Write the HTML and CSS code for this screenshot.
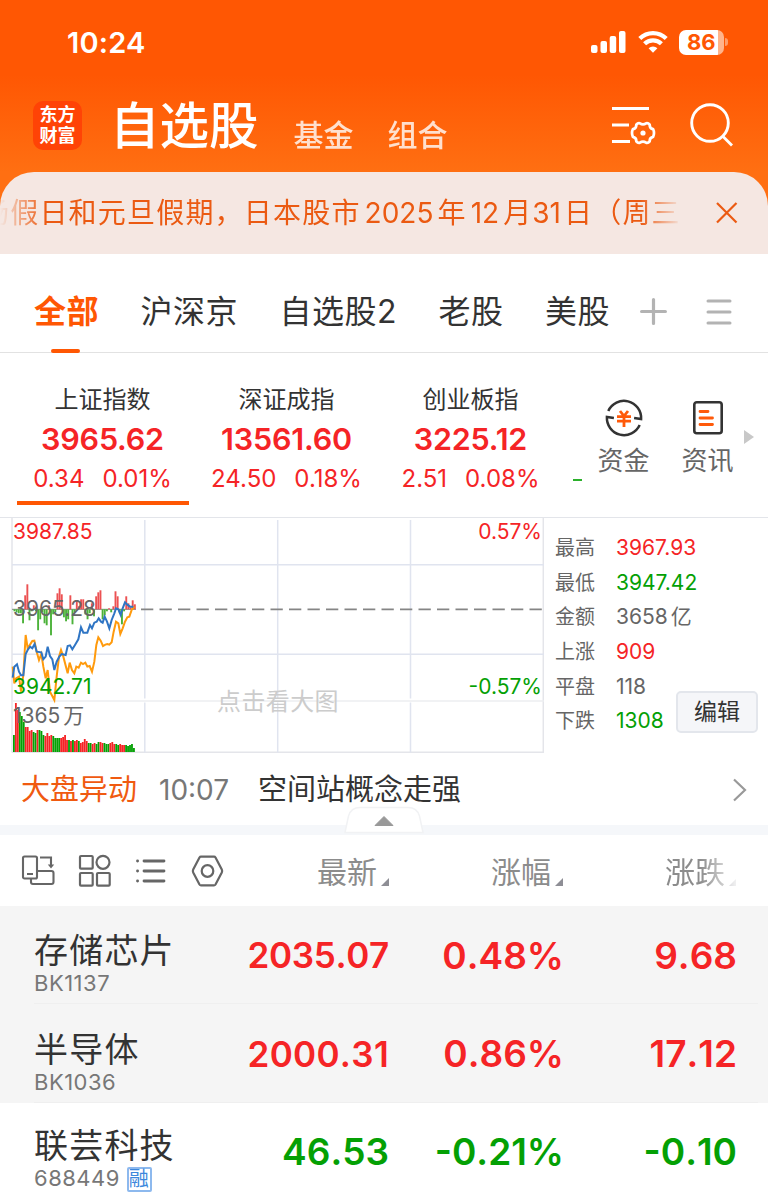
FILE: index.html
```html
<!DOCTYPE html>
<html lang="zh-CN">
<head>
  <meta charset="UTF-8">
  <title>自选股</title>
  <meta name="viewport" content="width=device-width, initial-scale=1.0">
  <link rel="stylesheet" href="styles.css">
</head>
<body>

<header class="top">
  <div class="status">
    <span class="time">10:24</span>
    <svg class="signal" width="36" height="24" viewBox="0 0 36 24" fill="#fff">
      <rect x="0" y="15" width="6.5" height="8" rx="2"/>
      <rect x="9.5" y="11" width="6.5" height="12" rx="2"/>
      <rect x="18.7" y="6" width="6.5" height="17" rx="2"/>
      <rect x="28" y="1" width="6.5" height="22" rx="2"/>
    </svg>
    <svg class="wifi" width="30" height="24" viewBox="0 0 30 24" fill="none" stroke="#fff" stroke-width="4.2">
      <path d="M1.8 8.6a18.6 18.6 0 0 1 26.4 0"/>
      <path d="M6.6 13.8a11.8 11.8 0 0 1 16.8 0"/>
      <path d="M10.6 18.3a6.2 6.2 0 0 1 8.8 0L15 22.8z" fill="#fff" stroke="none"/>
    </svg>
    <span class="battery">86</span>
    <span class="battery-cap"></span>
  </div>
  <nav class="nav">
    <div class="logo">东方<br>财富</div>
    <span class="nav-title">自选股</span>
    <span class="nav-link">基金</span>
    <span class="nav-link second">组合</span>
    <svg class="list-set" width="44" height="42" viewBox="0 0 44 42" fill="none" stroke="#fff" stroke-width="3">
      <path d="M0 3.5h37M0 20h17M0 36.5h18"/>
      <path stroke-linejoin="round" stroke-width="2.7" d="M27.9 18.3q3.1 2.2 6.2 0q2-.6 3.6 1.4q-.2 3.8 3.4 4.5q1.8 3.8 0 7.6q-3.6.7-3.4 4.5q-1.6 2-3.6 1.4q-3.1-2.2-6.2 0q-2 .6-3.6-1.4q.2-3.8-3.4-4.5q-1.8-3.8 0-7.6q3.6-.7 3.4-4.5q1.6-2 3.6-1.4z"/>
      <circle cx="31" cy="28" r="2.6" fill="#fff" stroke="none"/>
    </svg>
    <svg class="search" width="44" height="46" viewBox="0 0 44 46" fill="none" stroke="#fff" stroke-width="2.9">
      <circle cx="20" cy="21" r="18.3"/>
      <path d="M33 34.5l9 9"/>
    </svg>
  </nav>
</header>

<div class="notice-wrap">
  <div class="notice">
    <div class="notice-text"><p>场假日和元旦假期，日本股市<i>2025</i>年<i>12</i>月<i class="tight">31</i>日（周三）</p></div>
    <svg width="22" height="22" viewBox="0 0 22 22" stroke="#eb5a12" stroke-width="2.2"><path d="M1 1l19.5 19.5M20.5 1L1 20.5"/></svg>
  </div>
</div>

<nav class="tabs">
  <span class="tab active">全部</span>
  <span class="tab">沪深京</span>
  <span class="tab">自选股2</span>
  <span class="tab">老股</span>
  <span class="tab">美股</span>
  <svg class="plus" width="27" height="27" viewBox="0 0 27 27" stroke="#b3b3b3" stroke-width="3.2" stroke-linecap="round"><path d="M13.5 1.6v23.8M1.6 13.5h23.8"/></svg>
  <svg class="menu" width="26" height="26" viewBox="0 0 26 26" stroke="#b3b3b3" stroke-width="3" stroke-linecap="round"><path d="M2 2h22M2 13h22M2 24h22"/></svg>
</nav>

<section class="indices">
  <div class="index active">
    <h3>上证指数</h3>
    <b>3965.62</b>
    <p><span>0.34</span><span>0.01%</span></p>
  </div>
  <div class="index">
    <h3>深证成指</h3>
    <b>13561.60</b>
    <p><span>24.50</span><span>0.18%</span></p>
  </div>
  <div class="index">
    <h3>创业板指</h3>
    <b>3225.12</b>
    <p><span>2.51</span><span>0.08%</span></p>
  </div>
  <i class="next-index"></i>
  <div class="shortcut">
    <svg width="40" height="40" viewBox="0 0 40 40" fill="none" stroke="#333" stroke-width="2.5">
      <path d="M4.3 12.9A17.2 17.2 0 0 1 37.1 21l-7-1"/>
      <path d="M35.7 27.1A17.2 17.2 0 0 1 2.9 19l7 1"/>
      <path stroke="#ff5a0a" stroke-width="2.8" d="M16 13l4 5l4-5M13 18.7h14M13 23.2h14M20 17v12"/>
    </svg>
    <span>资金</span>
  </div>
  <div class="shortcut">
    <svg width="40" height="40" viewBox="0 0 40 40" fill="none" stroke="#333" stroke-width="2.6">
      <rect x="6.3" y="4.3" width="27.4" height="31" rx="2.5"/>
      <path stroke="#ff5a0a" stroke-width="2.8" stroke-linecap="round" d="M12 13.5h8M12 20h12.500M12 26.500h12.500"/>
    </svg>
    <span>资讯</span>
  </div>
  <i class="more-arrow"></i>
</section>

<section class="market">
  <svg class="chart" width="544" height="237" viewBox="0 7 544 237">
    <g fill="none" stroke="#e0e4ef" stroke-width="1.5">
      <path d="M12 7.5v235M543.3 7.5v235M12 242.3h532" stroke="#e4e5ea"/>
      <path d="M144.8 10v178.5M277.7 10v178.5M410.5 10v178.5M144.8 192.5v50M277.7 192.5v50M410.5 192.5v50M12 54.7h532M12 144.2h532"/>
      <path d="M12 191h532" stroke="#eceef1"/>
    </g>
    <path d="M141 99.3h401" stroke="#858585" stroke-width="1.7" stroke-dasharray="12.3 6.2"/>
    <path d="M12 99.3h124" stroke="#858585" stroke-width="1"/>
    <text x="217" y="199.5" class="hint">点击看大图</text>
    <g id="strength"></g>
    <g id="volume"></g>
    <g fill="none" stroke-width="6" transform="scale(.33333)">
      <polyline stroke="#ff9a0c" points="38,470 43,520 48,505 57,500 63,545 70,495 77,375 83,415 97,393 103,392 110,425 117,450 124,432 130,470 137,505 143,480 150,545 163,570 170,500 177,440 183,420 190,440 203,490 209,458 216,480 223,490 229,470 236,473 243,458 249,462 256,458 262,470 269,468 276,485 283,455 289,405 295,382 302,392 309,408 316,404 322,402 328,404 335,397 341,365 348,335 355,340 361,372 368,355 375,335 382,322 388,320 395,300 403,290"/>
      <polyline stroke="#2f75c4" points="38,503 43,470 51,463 57,485 63,496 70,496 77,432 83,420 90,410 97,415 104,402 110,425 124,427 130,448 137,440 143,410 150,438 157,448 163,480 170,455 178,440 185,432 197,435 203,408 210,406 217,418 225,405 235,388 243,352 250,368 262,368 270,345 276,355 283,338 290,335 296,325 303,335 308,338 314,320 321,335 328,355 335,330 343,310 348,295 355,298 362,315 368,295 375,277 382,284 390,290 400,290"/>
    </g>
    <g class="axis">
      <text x="13" y="28.5" class="up">3987.85</text>
      <text x="13" y="106" class="mid">3965.28</text>
      <text x="13" y="183.5" class="down">3942.71</text>
      <text x="13" y="213" class="mid">1365<tspan dx="3">万</tspan></text>
      <text x="542" y="28.5" text-anchor="end" class="up">0.57%</text>
      <text x="542" y="183.5" text-anchor="end" class="down">-0.57%</text>
    </g>
  </svg>
  <dl class="stats">
    <dt>最高</dt><dd class="up">3967.93</dd>
    <dt>最低</dt><dd class="down">3947.42</dd>
    <dt>金额</dt><dd>3658<em>亿</em></dd>
    <dt>上涨</dt><dd class="up">909</dd>
    <dt>平盘</dt><dd>118</dd>
    <dt>下跌</dt><dd class="down">1308</dd>
  </dl>
  <button class="edit">编辑</button>
</section>

<section class="news">
  <span class="news-tag">大盘异动</span>
  <span class="news-time">10:07</span>
  <span class="news-text">空间站概念走强</span>
  <svg width="16" height="24" viewBox="0 0 16 24" fill="none" stroke="#999" stroke-width="2.2"><path d="M2 1.5L13 12L2 22.5"/></svg>
</section>

<div class="divider">
  <svg class="pull" width="80" height="28" viewBox="0 0 80 28">
    <path d="M1 26.5L4.5 10Q7 1.5 16 1.5H64Q73 1.5 75.5 10L79 26.5z" fill="#fff" stroke="#f1f2f4" stroke-width="1.5"/>
    <path d="M40 10.500l9 9H31z" fill="#999" stroke="#999" stroke-linejoin="round"/>
  </svg>
</div>

<div class="grid list-head">
  <div class="tools">
    <svg width="34" height="34" viewBox="0 0 34 34" fill="none" stroke="#666" stroke-width="2.1">
      <rect x="2" y="2.500" width="14" height="22" rx="1.500"/>
      <path d="M6 20h6M19 3.500h11v8M17 17h13.500a2 2 0 0 1 2 2v9a2 2 0 0 1-2 2H12a2 2 0 0 1-2-2V25"/>
      <path d="M26.800 10.500h6.400L30 14.500z" fill="#666" stroke="none"/>
    </svg>
    <svg width="34" height="34" viewBox="0 0 34 34" fill="none" stroke="#666" stroke-width="2.200">
      <rect x="2" y="2" width="12.700" height="12.700" rx="1"/>
      <circle cx="25" cy="8.300" r="6.500"/>
      <rect x="2" y="19" width="12.700" height="12.700" rx="1"/>
      <rect x="19" y="19" width="12.700" height="12.700" rx="1"/>
    </svg>
    <svg width="34" height="34" viewBox="0 0 34 34" fill="none" stroke="#666" stroke-width="2.800" stroke-linecap="round">
      <path d="M10 7h20M10 17h20M10 27h20M3.500 7h.1M3.500 17h.1M3.500 27h.1"/>
    </svg>
    <svg width="34" height="34" viewBox="0 0 34 34" fill="none" stroke="#666" stroke-width="2.200" stroke-linejoin="round">
      <path d="M10 2.700h13q1 0 1.500.8l6.300 12q.7 1.500 0 3l-6.300 12q-.5.800-1.500.8H10q-1 0-1.500-.8l-6.300-12q-.7-1.500 0-3l6.300-12q.5-.8 1.500-.8z"/>
      <circle cx="16.500" cy="17" r="5.800"/>
    </svg>
  </div>
  <span class="sort">最新</span>
  <span class="sort">涨幅</span>
  <span class="sort fade">涨跌</span>
</div>

<div class="grid stock pinned">
  <div class="name">存储芯片<small>BK1137</small></div>
  <b class="up long">2035.07</b><b class="up percent">0.48%</b><b class="up">9.68</b>
</div>
<div class="grid stock pinned">
  <div class="name">半导体<small>BK1036</small></div>
  <b class="up long wide">2000.31</b><b class="up percent">0.86%</b><b class="up">17.12</b>
</div>
<div class="grid stock">
  <div class="name">联芸科技<small>688449 <span class="badge">融</span></small></div>
  <b class="down">46.53</b><b class="down percent">-0.21%</b><b class="down">-0.10</b>
</div>

<script src="chart.js"></script>
</body>
</html>
```

FILE: styles.css
```css
body {
  margin: 0;
  height: 1199px;
  overflow: hidden;
  background: #fff;
  color: #333;
  font-family: "Inter", "Noto Sans CJK SC", sans-serif;
}

h3, p, dl, dd {
  margin: 0;
  font-weight: 400;
}

svg {
  display: block;
  flex: none;
}

i, em {
  font-style: normal;
}

.up {
  color: #f52426;
  fill: #f52426;
}

.down {
  color: #04a004;
  fill: #04a004;
}

/* header */
.top {
  height: 172px;
  background: linear-gradient(#ff5703 75px, #ff6f12 172px);
  color: #fff;
}

.status {
  display: flex;
  align-items: center;
  height: 84px;
  padding-left: 67px;
}

.time {
  width: 524px;
  font-size: 29px;
  font-weight: 600;
  letter-spacing: .2px;
}

.wifi {
  margin-left: 11px;
}

.battery {
  width: 45px;
  height: 25px;
  margin-left: 11px;
  border-radius: 7px;
  background: linear-gradient(90deg, #fff 39px, #ffb48c 39px);
  color: #ff5703;
  font-size: 22px;
  font-weight: 700;
  line-height: 25px;
  text-indent: 8px;
}

.battery-cap {
  width: 3px;
  height: 8px;
  margin-left: 1px;
  border-radius: 0 4px 4px 0;
  background: #ff9c69;
}

.nav {
  display: flex;
  align-items: center;
  height: 82px;
  padding-left: 33px;
}

.logo {
  width: 49px;
  height: 49px;
  border-radius: 10px;
  background: #ff4306;
  font-size: 18px;
  font-weight: 700;
  line-height: 21px;
  text-align: center;
  box-sizing: border-box;
  padding-top: 3px;
}

.nav-title {
  margin-left: 28px;
  font-size: 49.5px;
  font-weight: 500;
  line-height: 82px;
  padding-top: 2px;
}

.nav-link {
  margin: 15px 0 0 35px;
  font-size: 30px;
  font-weight: 500;
  opacity: .8;
}

.nav-link.second {
  margin-left: 34px;
}

.list-set {
  margin: 2px 0 0 164px;
}

.search {
  margin-left: 34px;
}

/* scrolling notice */
.notice-wrap {
  background: #ff6f12;
}

.notice {
  display: flex;
  align-items: center;
  height: 82px;
  border-radius: 34px 34px 0 0;
  background: #f5e7e2;
}

.notice-text {
  width: 685px;
  margin-right: 31px;
  overflow: hidden;
  -webkit-mask: linear-gradient(90deg, transparent, #000 45px, #000 640px, transparent 682px);
  mask: linear-gradient(90deg, transparent, #000 45px, #000 640px, transparent 682px);
}

.notice-text p {
  margin-left: -19px;
  color: #eb5a12;
  font-size: 28px;
  letter-spacing: 1.2px;
  line-height: 44px;
  white-space: nowrap;
}

.notice-text i {
  margin: 0 4px;
  letter-spacing: 0;
}

.notice-text .tight {
  margin: 0 3px 0 0;
}

/* group tabs */
.tabs {
  display: flex;
  align-items: center;
  height: 81px;
  padding: 17px 36px 0 34px;
  border-bottom: 1px solid #e2e2e2;
}

.tab {
  position: relative;
  margin-right: 41.5px;
  font-size: 32px;
  letter-spacing: .5px;
  line-height: 81px;
}

.tab.active {
  color: #ff5703;
  font-weight: 700;
}

.tab.active::after {
  content: "";
  position: absolute;
  left: 17px;
  bottom: -1px;
  width: 29px;
  height: 4px;
  border-radius: 2px;
  background: #ff5703;
}

.plus {
  margin-left: -12px;
}

.menu {
  margin-left: 39px;
}

/* index quotes */
.indices {
  display: flex;
  height: 164px;
  padding-left: 10.5px;
}

.index {
  width: 184px;
  padding-top: 30px;
  text-align: center;
}

.index h3 {
  font-size: 24px;
  line-height: 34px;
}

.index b {
  display: block;
  color: #f52426;
  font-size: 30.5px;
  font-weight: 600;
  letter-spacing: -.2px;
  line-height: 44px;
}

.index p {
  display: flex;
  justify-content: center;
  gap: 18px;
  color: #f52426;
  font-size: 24px;
  line-height: 35px;
}

.index.active::after {
  content: "";
  display: block;
  width: 172px;
  height: 4px;
  margin: 5px auto 0;
  background: #ff5703;
}

.next-index {
  width: 9px;
  height: 2px;
  margin: 126px 0 0 10px;
  background: #2bb02b;
}

.shortcut {
  width: 84px;
  padding-top: 45px;
  color: #666;
  font-size: 26px;
  line-height: 46px;
  text-align: center;
}

.shortcut svg {
  margin: 0 auto;
}

.more-arrow {
  margin: 77px 0 0 -6px;
  height: 0;
  border-left: 10px solid #c8c8c8;
  border-top: 7px solid transparent;
  border-bottom: 7px solid transparent;
}

/* minute chart and stats */
.market {
  position: relative;
  display: flex;
  height: 237px;
  box-shadow: inset 0 1px #e3e5ea;
}

.axis {
  font-size: 21px;
}

.mid {
  fill: #666;
}

.hint {
  fill: #ccc;
  font-size: 24px;
  letter-spacing: .4px;
}

.stats {
  display: grid;
  grid-template-columns: 61px auto;
  grid-auto-rows: 34.7px;
  padding: 14px 0 0 11px;
  color: #666;
  font-size: 20px;
  line-height: 34.7px;
}

.stats dd {
  font-size: 21px;
}

.stats em {
  margin-left: 3px;
}

.edit {
  position: absolute;
  right: 10px;
  top: 174px;
  width: 82px;
  height: 42px;
  padding: 0;
  border: 2px solid #e3e6ec;
  border-radius: 5px;
  background: #f5f6f9;
  color: #333;
  font: 23px/38px "Inter", "Noto Sans CJK SC", sans-serif;
}

/* market news */
.news {
  display: flex;
  align-items: center;
  height: 71px;
  padding-left: 21px;
  font-size: 29px;
  line-height: 70px;
}

.news-tag {
  width: 138px;
  color: #f05a10;
}

.news-time {
  width: 99px;
  color: #777;
  font-size: 28px;
}

.news-text {
  width: 474px;
}

.divider {
  position: relative;
  height: 10px;
  background: #f5f7fa;
}

.pull {
  position: absolute;
  left: 344px;
  bottom: 1px;
}

/* stock list */
.grid {
  display: grid;
  grid-template-columns: 200px 188px 174px 174px;
  align-items: center;
}

.list-head {
  height: 71px;
}

.tools {
  display: flex;
  gap: 22.5px;
  padding-left: 21px;
}

.sort {
  position: relative;
  padding: 3px 11px 0 0;
  color: #8c8c8c;
  font-size: 30px;
  line-height: 68px;
  text-align: right;
}

.sort::after {
  content: "";
  position: absolute;
  right: -1px;
  bottom: 20px;
  border-left: 8px solid transparent;
  border-bottom: 8px solid #8e8e95;
}

.sort.fade {
  -webkit-mask: linear-gradient(90deg, #000 138px, rgba(0, 0, 0, .1) 175px);
  mask: linear-gradient(90deg, #000 138px, rgba(0, 0, 0, .1) 175px);
}

.stock {
  position: relative;
  height: 98.4px;
}

.pinned {
  background: #f5f5f5;
}

.pinned::after {
  content: "";
  position: absolute;
  left: 34px;
  right: 10px;
  bottom: 0;
  height: 1px;
  background: #efefef;
}

.name {
  padding: 14px 0 0 34px;
  font-size: 34px;
  letter-spacing: 1.2px;
  line-height: 42px;
  white-space: nowrap;
}

.name small {
  display: block;
  color: #777;
  font-size: 22px;
  letter-spacing: .5px;
  line-height: 22px;
}

.badge {
  display: inline-block;
  width: 21px;
  height: 21px;
  border: 2px solid #8db9ee;
  border-radius: 2px;
  color: #3c87dc;
  font-size: 20px;
  letter-spacing: 0;
  line-height: 21px;
  vertical-align: top;
}

.stock b {
  margin-right: -1px;
  font-size: 37px;
  font-weight: 600;
  font-kerning: none;
  text-align: right;
}

.stock .percent {
  margin-right: -2px;
}

.stock .long {
  font-size: 35px;
  letter-spacing: -.3px;
}

.stock .wide {
  letter-spacing: .3px;
}
```

FILE: chart.js
```js
const NS = "http://www.w3.org/2000/svg";

function bar(group, x, y, w, h, color) {
  const r = document.createElementNS(NS, "rect");
  r.setAttribute("x", x);
  r.setAttribute("y", y);
  r.setAttribute("width", w);
  r.setAttribute("height", h);
  r.setAttribute("fill", color);
  group.appendChild(r);
}

// minute strength: positive goes up, negative goes down
const strength = [-2, -3, -4, -4, -14, 14, 25, -11, -2, 4, -2, -21, -10, -3, -14, -16, 4, -26, -5, -3, 16, 21, 15, -8, -12, -10, 14, -15, -3, 9, 3, 10, 10, -5, -10, -4, 6, -7, 13, 17, 19, -10, -6, -2, 1, -3, 3, 18, 13, -4, -15, -2, 13, 6, 2, 9, 5];
// minute volume, r = rising, g = falling
const volume = "g17 r49 r42 g40 g36 g30 r25 r25 r21 r22 g20 g19 r22 g22 g21 g17 r16 r19 r16 r17 g16 g14 g14 g14 r14 r15 r17 r12 g12 r11 g12 r11 r12 g11 r9 r10 r13 r11 g9 g9 r8 r9 g8 g10 r10 r9 g9 g8 g8 r9 r10 r8 g8 g7 r8 r7 r7 g7 g6 g7 g8 g4".split(" ");

const up = document.getElementById("strength");
strength.forEach((v, i) => {
  bar(up, 13.5 + i * 2.15, v > 0 ? 99.3 - v : 99.3, 1.9, Math.abs(v), v > 0 ? "#ec5152" : "#4cb23a");
});

const vol = document.getElementById("volume");
const step = 122 / volume.length;
volume.forEach((v, i) => {
  const h = Number(v.slice(1));
  bar(vol, 13 + i * step, 242 - h, step - 0.15, h, v[0] === "r" ? "#f52426" : "#04a004");
});
```
